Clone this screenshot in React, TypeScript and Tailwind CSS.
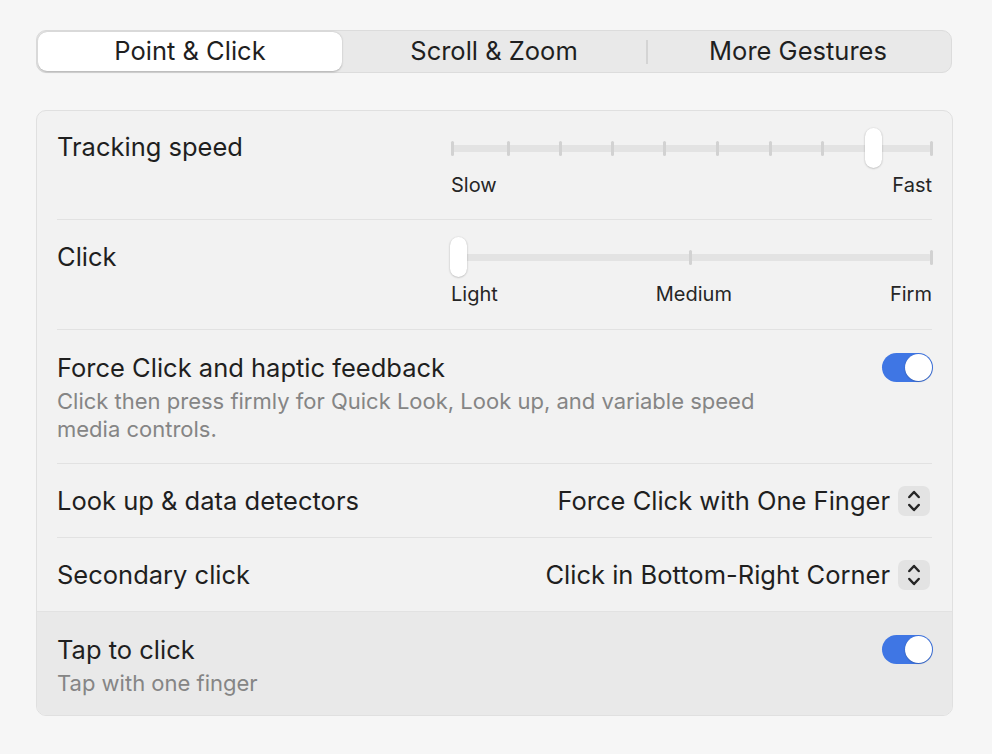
import React from 'react'

const trackingTicks = [453, 509, 561, 613, 665, 718.5, 771, 823, 877, 932]
const clickTicks = [459, 691, 932]
const SLIDER_LEFT = 451

function Slider({ ticks, thumb, labels }: { ticks: number[]; thumb: number; labels: string[] }) {
  return (
    <div className="w-[484px]">
      <div className="relative h-[40px]">
        <div className="absolute left-[1px] right-[2px] top-[16.5px] h-[7px] rounded-full bg-[#e3e3e3]" />
        {ticks.map((t) => (
          <div
            key={t}
            className="absolute top-[12.5px] h-[15px] w-[3px] rounded-full bg-[#d2d2d2]"
            style={{ left: t - SLIDER_LEFT - 1.5 }}
          />
        ))}
        <div
          className="absolute top-0 h-[40px] w-[17px] rounded-full bg-white shadow-[0_0.5px_2px_rgba(0,0,0,0.3)]"
          style={{ left: thumb - SLIDER_LEFT - 8.5 }}
        />
      </div>
      <div className="mt-[5px] flex justify-between pl-[1px] pr-[2px] text-[20px] leading-[24px] text-[#262626]">
        {labels.map((l) => (
          <span key={l}>{l}</span>
        ))}
      </div>
    </div>
  )
}

function Toggle() {
  return (
    <div className="flex h-[29px] w-[51px] items-center justify-end rounded-full bg-[#3f76e4] pr-[1px]">
      <div className="h-[27px] w-[27px] rounded-full bg-white shadow-[0_0.5px_1.5px_rgba(0,0,0,0.3)]" />
    </div>
  )
}

function PopUp({ value }: { value: string }) {
  return (
    <div className="flex items-center gap-[8px]">
      <span className="text-[25.5px] leading-[30px] text-[#1f1f1f]">{value}</span>
      <div className="flex h-[30px] w-[32px] items-center justify-center rounded-[7px] bg-[#e3e3e3]">
        <svg width="32" height="30" viewBox="0 0 32 30" fill="none" stroke="#262626" strokeWidth="2.5" strokeLinecap="round" strokeLinejoin="round">
          <path d="M11.3 11 L16 6 L20.7 11" />
          <path d="M11.3 19 L16 24 L20.7 19" />
        </svg>
      </div>
    </div>
  )
}

const Divider = () => <div className="mx-[20px] h-px bg-[#e2e2e2]" />

export default function App() {
  return (
    <div
      className="min-h-screen bg-[#f6f6f6] pt-[30px] text-[#1f1f1f]"
      style={{ fontFamily: 'Inter, "Noto Sans", sans-serif' }}
    >
      <div className="ml-[36px] grid h-[43px] w-[916px] grid-cols-3 items-center rounded-[10px] border border-[#dcdcdc] bg-[#e9e9e9] p-px text-[25.5px]">
        <div className="flex h-full items-center justify-center rounded-[9px] bg-white shadow-[0_0.5px_2px_rgba(0,0,0,0.25)]">
          Point &amp; Click
        </div>
        <div className="flex h-full items-center justify-center">Scroll &amp; Zoom</div>
        <div className="relative flex h-full items-center justify-center">
          <div className="absolute left-0 top-[8px] h-[24px] w-[2px] bg-[#d4d4d4]" />
          More Gestures
        </div>
      </div>

      <div className="ml-[36px] mt-[37px] w-[917px] overflow-hidden rounded-[10px] border border-[#e0e0e0] bg-[#f2f2f2]">
        <div className="flex h-[108px] items-start justify-between px-[20px]">
          <div className="mt-[21px] text-[25.5px] leading-[30px]">Tracking speed</div>
          <div className="mt-[17px] -mr-[2px]">
            <Slider ticks={trackingTicks} thumb={874} labels={['Slow', 'Fast']} />
          </div>
        </div>
        <Divider />
        <div className="flex h-[109px] items-start justify-between px-[20px]">
          <div className="mt-[22px] text-[25.5px] leading-[30px]">Click</div>
          <div className="mt-[17px] -mr-[2px]">
            <Slider ticks={clickTicks} thumb={459} labels={['Light', 'Medium', 'Firm']} />
          </div>
        </div>
        <Divider />
        <div className="flex h-[133px] items-start justify-between pl-[20px] pr-[19px]">
          <div className="mt-[23px]">
            <div className="text-[25.5px] leading-[30px]">Force Click and haptic feedback</div>
            <div className="mt-[4px] text-[22px] leading-[28px] text-[#858585]">
              Click then press firmly for Quick Look, Look up, and variable speed
              <br />
              media controls.
            </div>
          </div>
          <div className="mt-[23px]">
            <Toggle />
          </div>
        </div>
        <Divider />
        <div className="flex h-[73px] items-center justify-between pl-[20px] pr-[22px]">
          <div className="text-[25.5px] leading-[30px]">Look up &amp; data detectors</div>
          <PopUp value="Force Click with One Finger" />
        </div>
        <Divider />
        <div className="flex h-[73px] items-center justify-between pl-[20px] pr-[22px]">
          <div className="text-[25.5px] leading-[30px]">Secondary click</div>
          <PopUp value="Click in Bottom-Right Corner" />
        </div>
        <div className="flex h-[104px] items-start justify-between border-t border-[#e2e2e2] bg-[#e9e9e9] pl-[20px] pr-[19px]">
          <div className="mt-[23px]">
            <div className="text-[25.5px] leading-[30px]">Tap to click</div>
            <div className="mt-[4px] text-[22px] leading-[28px] text-[#858585]">Tap with one finger</div>
          </div>
          <div className="mt-[23px]">
            <Toggle />
          </div>
        </div>
      </div>
    </div>
  )
}
